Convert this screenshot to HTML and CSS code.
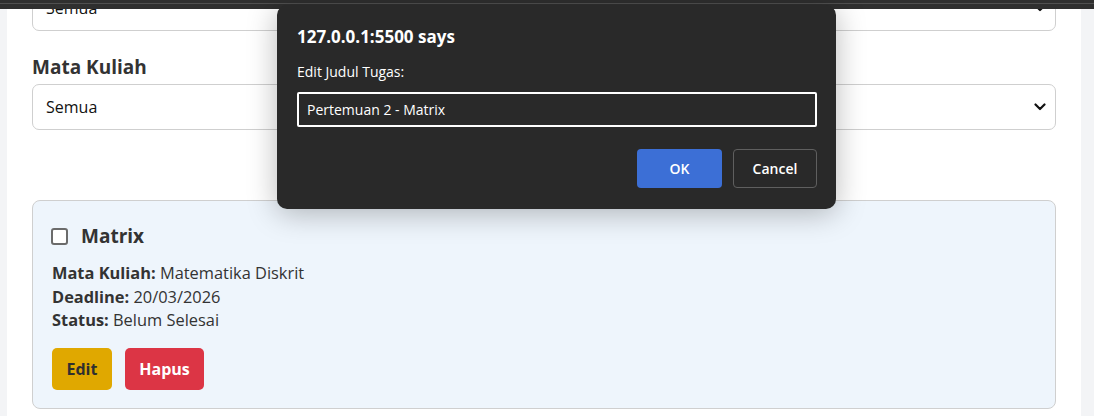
FILE: index.html
```html
<!DOCTYPE html>
<html lang="id">
<head>
<meta charset="utf-8">
<title>Daftar Tugas</title>
<link rel="stylesheet" href="styles.css">
</head>
<body>
<div class="topbar"><div class="topline"></div></div>
<div class="viewport">
  <main class="page">
    <div class="select first">
      <span>Semua</span>
      <svg class="chev" width="12" height="8" viewBox="0 0 12 8"><path d="M1.5 1.5 L6 6 L10.5 1.5" fill="none" stroke="#111" stroke-width="2.2" stroke-linecap="round" stroke-linejoin="round"/></svg>
    </div>
    <label class="field-label">Mata Kuliah</label>
    <div class="select">
      <span>Semua</span>
      <svg class="chev" width="12" height="8" viewBox="0 0 12 8"><path d="M1.5 1.5 L6 6 L10.5 1.5" fill="none" stroke="#111" stroke-width="2.2" stroke-linecap="round" stroke-linejoin="round"/></svg>
    </div>

    <section class="card">
      <div class="card-head">
        <span class="checkbox"></span>
        <h3 class="card-title">Matrix</h3>
      </div>
      <p class="row"><b>Mata Kuliah:</b> Matematika Diskrit</p>
      <p class="row"><b>Deadline:</b> 20/03/2026</p>
      <p class="row"><b>Status:</b> Belum Selesai</p>
      <div class="actions">
        <button class="btn btn-edit">Edit</button>
        <button class="btn btn-del">Hapus</button>
      </div>
    </section>
  </main>
</div>

<div class="dialog">
  <div class="dlg-title">127.0.0.1:5500 says</div>
  <div class="dlg-msg">Edit Judul Tugas:</div>
  <div class="dlg-input">Pertemuan 2 - Matrix</div>
  <div class="dlg-actions">
    <button class="dbtn dbtn-ok">OK</button>
    <button class="dbtn dbtn-cancel">Cancel</button>
  </div>
</div>
</body>
</html>
```
FILE: styles.css
```css
* { box-sizing: border-box; }
html, body { margin: 0; padding: 0; }
body {
  width: 1094px;
  height: 416px;
  overflow: hidden;
  background: #f3f4f6;
  font-family: "Open Sans", "Noto Sans", sans-serif;
  color: #333;
  position: relative;
}
.topbar {
  height: 9px;
  background: #2f2f2f;
  position: relative;
  z-index: 2;
}
.topline {
  position: absolute;
  left: 0; right: 0; top: 3px;
  height: 1px;
  background: #505050;
}
.viewport {
  height: 407px;
  overflow: hidden;
  padding: 0 13px 0 7px;
}
.page {
  background: #fff;
  min-height: 520px;
  padding: 1px 25px 0;
  margin-top: -1px;
}
.select {
  height: 46px;
  border: 1px solid #cfcfcf;
  border-radius: 7px;
  display: flex;
  align-items: center;
  justify-content: space-between;
  padding: 0 9px 0 13px;
  font-size: 16px;
  color: #111;
  background: #fff;
}
.select.first { margin-top: -24px; }
.chev { display: block; }
.field-label {
  display: block;
  font-weight: 700;
  font-size: 19px;
  margin: 24px 0 5px;
  color: #333;
  line-height: 24px;
}
.card {
  margin-top: 70px;
  background: #eef5fc;
  border: 1px solid #cfcfcf;
  border-radius: 8px;
  padding: 22px 19px 18px;
}
.card-head {
  display: flex;
  align-items: center;
  gap: 13px;
  margin-bottom: 12px;
}
.checkbox {
  width: 17px;
  height: 17px;
  border: 2px solid #6b6b6b;
  border-radius: 3px;
  background: #fff;
  margin-left: -1px;
}
.card-title {
  margin: 0;
  font-size: 19px;
  font-weight: 700;
  line-height: 26px;
}
.row {
  margin: 0;
  font-size: 16.4px;
  line-height: 23.5px;
}
.row b { font-weight: 700; }
.actions {
  display: flex;
  gap: 13px;
  margin-top: 16px;
}
.btn {
  height: 42px;
  border: none;
  border-radius: 5px;
  font-family: inherit;
  font-weight: 700;
  font-size: 16px;
  padding: 0;
}
.btn-edit { background: #e0a800; color: #2f2f2f; width: 60px; }
.btn-del { background: #dc3545; color: #fff; width: 79px; }

.dialog {
  position: absolute;
  left: 277px;
  top: 5px;
  width: 559px;
  height: 204px;
  background: #292929;
  border-radius: 10px;
  box-shadow: 0 4px 30px rgba(0,0,0,0.28);
  padding: 0 19px 0 20px;
  color: #fff;
  z-index: 5;
}
.dlg-title {
  font-weight: 700;
  font-size: 17px;
  margin-top: 22px;
  line-height: 20px;
}
.dlg-msg {
  font-size: 14px;
  margin-top: 16px;
  line-height: 18px;
}
.dlg-input {
  margin-top: 11px;
  height: 35px;
  border: 2px solid #fff;
  border-radius: 2px;
  font-size: 14px;
  display: flex;
  align-items: center;
  padding-left: 8px;
}
.dlg-actions {
  display: flex;
  justify-content: flex-end;
  gap: 11px;
  margin-top: 22px;
}
.dbtn {
  height: 39px;
  border-radius: 4px;
  font-family: inherit;
  font-size: 14px;
  font-weight: 600;
  color: #fff;
}
.dbtn-ok { width: 85px; background: #3c6fd6; border: none; }
.dbtn-cancel { width: 84px; background: transparent; border: 1px solid #5f5f5f; }
```
